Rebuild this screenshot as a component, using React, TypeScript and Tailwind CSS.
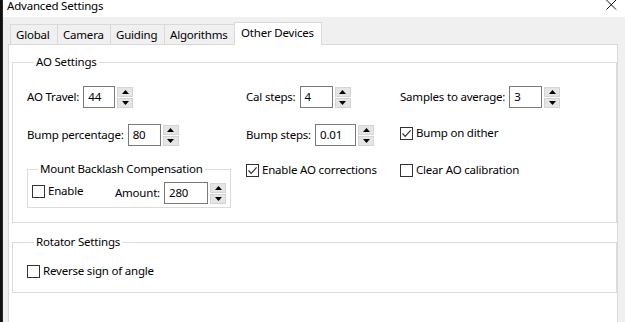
import React from 'react';

// Small up/down spinner beside a numeric box
function Spin() {
  return (
    <div className="ml-[2px] flex flex-col gap-px w-[16px]">
      <div className="h-[10px] bg-[#e5e5e5] border border-[#d4d4d4] flex items-center justify-center">
        <svg width="7" height="4" viewBox="0 0 7 4">
          <path d="M0 4 L3.5 0 L7 4 Z" fill="#000" />
        </svg>
      </div>
      <div className="h-[10px] bg-[#e5e5e5] border border-[#d4d4d4] flex items-center justify-center">
        <svg width="7" height="4" viewBox="0 0 7 4">
          <path d="M0 0 L3.5 4 L7 0 Z" fill="#000" />
        </svg>
      </div>
    </div>
  );
}

interface NumberFieldProps {
  label: string;
  value: string;
  width: string;
}

function NumberField({ label, value, width }: NumberFieldProps) {
  return (
    <div className="flex items-center">
      <span className="leading-[16px]">{label}</span>
      <div className={`ml-[4px] h-[22px] border border-[#7a7a7a] bg-white flex items-center px-[4px] ${width}`}>
        {value}
      </div>
      <Spin />
    </div>
  );
}

function Check({ checked, label }: { checked?: boolean; label: string }) {
  return (
    <div className="flex items-center gap-[3px] leading-[16px]">
      <div className="w-[13px] h-[13px] border border-[#333] bg-white flex items-center justify-center">
        {checked && (
          <svg width="11" height="11" viewBox="0 0 11 11">
            <path d="M1.5 5.5 L4.2 8.3 L9.6 2.4" fill="none" stroke="#333" strokeWidth="1.2" />
          </svg>
        )}
      </div>
      <span>{label}</span>
    </div>
  );
}

const tabs = [
  { name: 'Global', w: 'w-[48px]' },
  { name: 'Camera', w: 'w-[54px]' },
  { name: 'Guiding', w: 'w-[55px]' },
  { name: 'Algorithms', w: 'w-[71px]' },
];

export default function App() {
  return (
    <div className="w-[625px] h-[322px] overflow-hidden flex bg-[#f0f0f0] text-[11.5px] tracking-[-0.2px] text-black font-['Segoe_UI','Noto_Sans',sans-serif]">
      {/* background window peeking through on the left */}
      <div className="w-[3px] h-full bg-[#111] border-r border-[#2a2a2a]" />

      <div className="flex-1 flex flex-col">
        {/* Title bar */}
        <div className="h-[17px] bg-white flex items-start justify-between shrink-0 overflow-hidden">
          <span className="ml-[4px] -mt-[2px] leading-[16px]">Advanced Settings</span>
          <svg className="mr-[8px] mt-0" width="11" height="11" viewBox="0 0 11 11">
            <path d="M0.5 0 L10 9.5 M10 0 L0.5 9.5" stroke="#111" strokeWidth="1" />
          </svg>
        </div>

        <div className="pl-[5px] pt-[5px] flex flex-col">
          {/* Tabs */}
          <div className="flex items-end h-[22px] ml-[2px] relative z-10">
            {tabs.map((t) => (
              <div
                key={t.name}
                className={`${t.w} -mr-px h-[20px] border border-b-0 border-[#d9d9d9] bg-[#f0f0f0] flex items-center pl-[5px] leading-[16px]`}
              >
                {t.name}
              </div>
            ))}
            <div className="w-[88px] h-[23px] -mb-px border border-b-0 border-[#d9d9d9] bg-white flex items-center pl-[6px] pb-[2px] leading-[16px]">
              Other Devices
            </div>
          </div>

          {/* Tab page */}
          <div className="w-[610px] h-[300px] border border-[#d9d9d9] bg-white">
            <fieldset className="ml-[3px] mt-[9px] w-[605px] border border-[#dcdcdc] pl-[14px] pb-[14px]">
              <legend className="ml-[7px] px-[2px] leading-[16px]">AO Settings</legend>

              <div className="grid grid-cols-[219px_154px_1fr] pt-[16px]">
                <NumberField label="AO Travel:" value="44" width="w-[32px]" />
                <NumberField label="Cal steps:" value="4" width="w-[33px]" />
                <NumberField label="Samples to average:" value="3" width="w-[33px]" />

                <div className="mt-[16px]">
                  <NumberField label="Bump percentage:" value="80" width="w-[33px]" />
                </div>
                <div className="mt-[16px]">
                  <NumberField label="Bump steps:" value="0.01" width="w-[41px]" />
                </div>
                <div className="mt-[17px]">
                  <Check checked label="Bump on dither" />
                </div>

                <div className="mt-[15px]">
                  <fieldset className="w-[204px] border border-[#dcdcdc] pl-[4px] pr-[4px] pb-[3px]">
                    <legend className="ml-[6px] px-[2px] leading-[16px]">Mount Backlash Compensation</legend>
                    <div className="flex items-start justify-between pt-[5px]">
                      <div className="mt-[1px]">
                        <Check label="Enable" />
                      </div>
                      <NumberField label="Amount:" value="280" width="w-[44px]" />
                    </div>
                  </fieldset>
                </div>
                <div className="mt-[16px]">
                  <Check checked label="Enable AO corrections" />
                </div>
                <div className="mt-[16px]">
                  <Check label="Clear AO calibration" />
                </div>
              </div>
            </fieldset>

            <fieldset className="ml-[3px] mt-[11px] w-[605px] border border-[#dcdcdc] pl-[14px] pt-[13px] pb-[13px]">
              <legend className="ml-[7px] px-[2px] leading-[16px]">Rotator Settings</legend>
              <Check label="Reverse sign of angle" />
            </fieldset>
          </div>
        </div>
      </div>
    </div>
  );
}
